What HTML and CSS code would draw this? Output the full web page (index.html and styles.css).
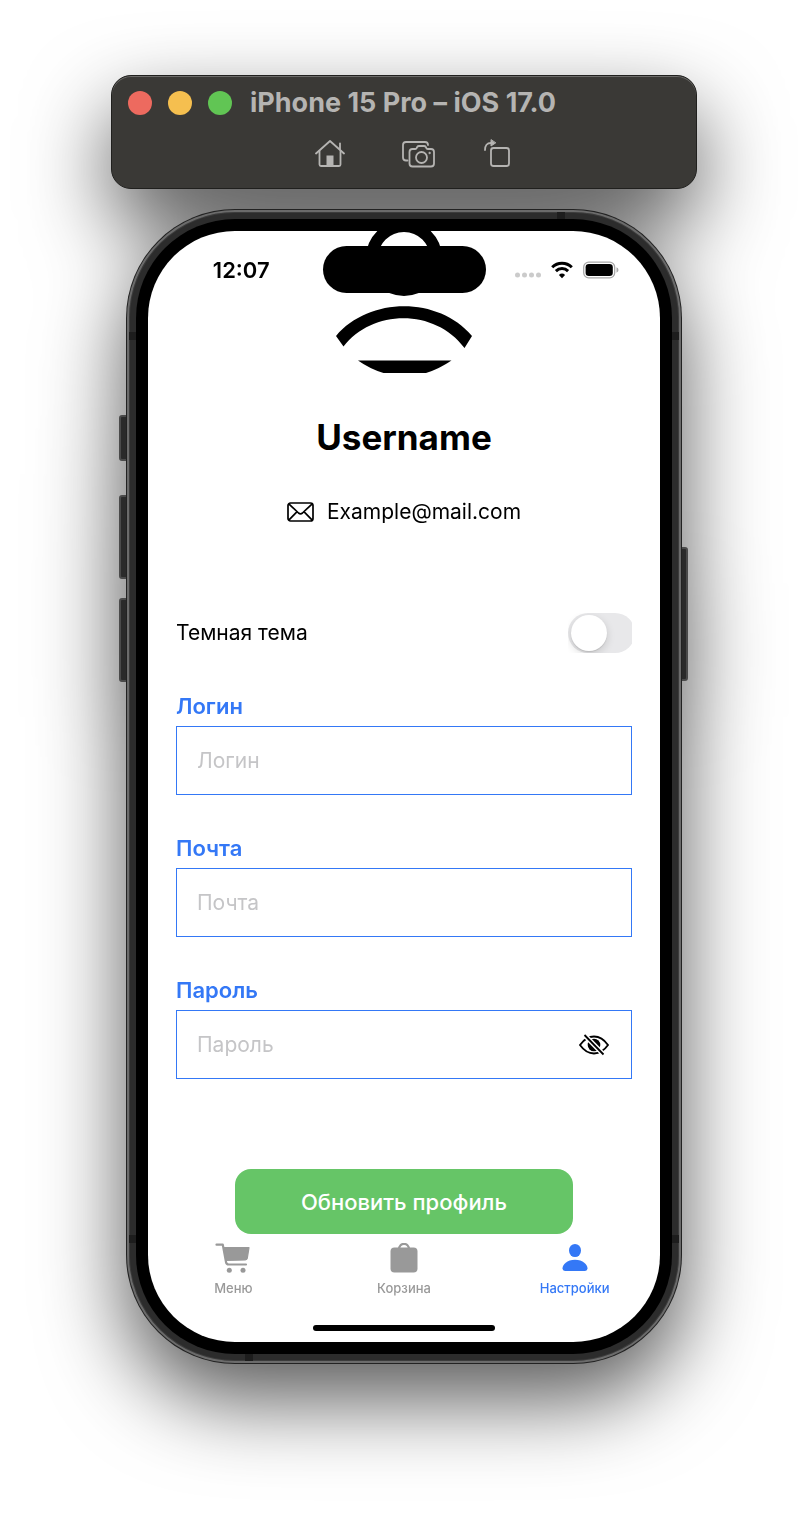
FILE: index.html
```html
<!DOCTYPE html>
<html lang="ru">
<head>
<meta charset="utf-8">
<meta name="viewport" content="width=device-width, initial-scale=1">
<title>iPhone 15 Pro – iOS 17.0</title>
<link rel="stylesheet" href="styles.css">
</head>
<body>
<div class="simulator">
  <header class="toolbar">
    <div class="toolbar-title">
      <button class="dot dot-close" type="button" aria-label="Close"></button>
      <button class="dot dot-minimize" type="button" aria-label="Minimize"></button>
      <button class="dot dot-zoom" type="button" aria-label="Zoom"></button>
      <span class="device-name">iPhone 15 Pro – iOS 17.0</span>
    </div>
    <div class="toolbar-actions">
      <button class="tool tool-home" type="button" aria-label="Home">
        <svg width="30" height="30" viewBox="0 0 30 30" fill="none" stroke="currentColor" stroke-width="1.800" stroke-linecap="round" stroke-linejoin="round"><path d="M1 14.500 15 2l14 12.500"/><path d="M4.500 12v13.500q0 1.500 1.500 1.500h18q1.500 0 1.500-1.500V12"/><path d="M25 10V4.500"/><path d="M11.500 27v-10.500h7V27z" fill="currentColor" stroke="none"/></svg>
      </button>
      <button class="tool" type="button" aria-label="Screenshot">
        <svg width="34" height="30" viewBox="0 0 34 30" fill="none" stroke="currentColor" stroke-width="1.800" stroke-linecap="round" stroke-linejoin="round"><path d="M5.500 21.500H4q-3 0-3-3V6q0-3 3-3h19q3 0 3 3"/><path d="M10.500 10H13q1 0 1.500-.8l.7-1.200Q15.800 7 17 7h5q1.200 0 1.800 1l.7 1.200q.5.800 1.500.8h3q3 0 3 3v11.500q0 3-3 3H10.500q-3 0-3-3V13q0-3 3-3z"/><circle cx="19.500" cy="18.500" r="5.500"/><circle cx="27.500" cy="14" r=".7" fill="currentColor" stroke-width="1"/></svg>
      </button>
      <button class="tool" type="button" aria-label="Rotate">
        <svg width="26" height="30" viewBox="0 0 26 30" fill="none" stroke="currentColor" stroke-width="1.800" stroke-linecap="round" stroke-linejoin="round"><rect x="7" y="9" width="18" height="18" rx="2.500"/><path d="M1 11Q1 4 7 4"/><path d="M7 1v6l4.500-3z" fill="currentColor" stroke-width="1"/></svg>
      </button>
    </div>
  </header>

  <div class="phone">
    <i class="side-key side-key-action"></i>
    <i class="side-key side-key-up"></i>
    <i class="side-key side-key-down"></i>
    <i class="side-key side-key-power"></i>
    <div class="frame">
      <i class="band band-upper"></i>
      <i class="band band-lower"></i>
      <i class="band-edge band-edge-top"></i>
      <i class="band-edge band-edge-bottom"></i>
      <div class="bezel">
        <main class="screen">
          <div class="status-bar">
            <time class="clock">12:07</time>
            <div class="island"></div>
            <div class="status-icons">
              <svg width="26" height="18" viewBox="0 0 26 18" fill="#cbcbcb"><circle cx="2.500" cy="14" r="2.500"/><circle cx="9.500" cy="14" r="2.500"/><circle cx="16.500" cy="14" r="2.500"/><circle cx="23.500" cy="14" r="2.500"/></svg>
              <svg width="22" height="18" viewBox="0 0 22 18" fill="none" stroke="#000" stroke-width="3"><path d="M1.200 6.300a14 14 0 0 1 19.600 0"/><path d="M4.900 10.100a8.700 8.700 0 0 1 12.200 0"/><path d="M11 17.200 7.900 13.900a4.600 4.600 0 0 1 6.200 0z" fill="#000" stroke="none"/></svg>
              <svg width="36" height="18" viewBox="0 0 36 18"><rect x=".7" y="1.200" width="31" height="15.600" rx="5" fill="none" stroke="#a8a8a8" stroke-width="1.300"/><rect x="2.600" y="3" width="27.200" height="12" rx="3.300"/><path d="M33.500 6.300q2 .8 2 2.700t-2 2.700z" fill="#a8a8a8"/></svg>
            </div>
          </div>

          <section class="profile">
            <svg class="avatar" width="136" height="142" viewBox="0 0 136 142"><circle cx="68" cy="27" r="32" fill="none" stroke="#000" stroke-width="12"/><path d="M0 105C33 66 102 65 136 105L128.500 117C99 77 36 78 7.500 115.500z"/><path d="M22 129.500H115.500Q103 138 90 142H47.500Q34 138 22 129.500z"/></svg>
            <h1 class="username">Username</h1>
            <p class="email">
              <svg width="27" height="20" viewBox="0 0 27 20" fill="none" stroke="#000" stroke-width="1.700" stroke-linejoin="round"><rect x="1" y="1" width="25" height="18" rx="2.500"/><path d="M1.800 1.800 11.500 11q2 1.600 4 0L25.200 1.800M1.800 18.200l8.300-8.500M25.200 18.200l-8.300-8.500"/></svg>
              <span>Example@mail.com</span>
            </p>
          </section>

          <form class="settings">
            <div class="theme-row">
              <label for="dark">Темная тема</label>
              <span class="switch-clip"><input class="switch" id="dark" type="checkbox" role="switch"></span>
            </div>
            <div class="field">
              <label class="field-label" for="login">Логин</label>
              <div class="field-box"><input class="field-input" id="login" type="text" placeholder="Логин"></div>
            </div>
            <div class="field">
              <label class="field-label" for="mail">Почта</label>
              <div class="field-box"><input class="field-input" id="mail" type="email" placeholder="Почта"></div>
            </div>
            <div class="field">
              <label class="field-label" for="password">Пароль</label>
              <div class="field-box">
                <input class="field-input" id="password" type="password" placeholder="Пароль">
                <button class="reveal" type="button" aria-label="Показать пароль">
                  <svg width="30" height="22" viewBox="0 0 30 22"><path d="M1 11Q7 2.500 15 2.500T29 11q-6 8.500-14 8.500T1 11z" fill="#fff" stroke="#000" stroke-width="1.800"/><circle cx="15" cy="11" r="6.300"/><path d="M6 1.500 24.500 20.500" stroke="#fff" stroke-width="4.800"/><path d="M5.500 1 24.500 20.500" stroke="#000" stroke-width="1.800"/></svg>
                </button>
              </div>
            </div>
            <button class="submit" type="submit">Обновить профиль</button>
          </form>

          <nav class="tabs">
            <a class="tab" href="#menu">
              <svg width="36" height="30" viewBox="0 0 36 30" fill="none" stroke="currentColor" stroke-width="2.200" stroke-linecap="round" stroke-linejoin="round"><path d="M1.500 1.700h6.300L11 19q.4 2.500 2.800 2.500H31"/><path d="M9 4.700h25l-1.700 10.500q-.3 1.600-2 1.700L11 17.500z" fill="currentColor" stroke-width="1.200"/><circle cx="14.300" cy="27.300" r="2.500" fill="currentColor" stroke="none"/><circle cx="28" cy="27.300" r="2.500" fill="currentColor" stroke="none"/></svg>
              <span>Меню</span>
            </a>
            <a class="tab" href="#cart">
              <svg width="28" height="30" viewBox="0 0 28 30" fill="currentColor"><rect x=".5" y="4.500" width="27" height="25" rx="4"/><path d="M9 6.500C9-1 19-1 19 6.500" fill="none" stroke="currentColor" stroke-width="2.200"/></svg>
              <span>Корзина</span>
            </a>
            <a class="tab tab-active" href="#settings" aria-current="page">
              <svg width="28" height="30" viewBox="0 0 28 30" fill="currentColor"><ellipse cx="14" cy="7.500" rx="6" ry="6.600"/><path d="M4 28q-2.500 0-2.500-2.400C1.500 21.500 6 16.700 14 16.700s12.500 4.800 12.500 8.900Q26.500 28 24 28z"/></svg>
              <span>Настройки</span>
            </a>
          </nav>
          <div class="home-indicator"></div>
        </main>
      </div>
    </div>
  </div>
</div>
</body>
</html>
```
FILE: styles.css
```css
* {
  box-sizing: border-box;
}

body {
  margin: 0;
  background: #fff;
  color: #000;
  font-family: Inter, "Liberation Sans", sans-serif;
}

button {
  margin: 0;
  padding: 0;
  border: 0;
  background: none;
  color: inherit;
  font: inherit;
}

svg {
  display: block;
  flex: none;
}

.simulator {
  display: flex;
  flex-direction: column;
  gap: 21px;
  padding: 75px 111px 150px;
  filter: drop-shadow(0 36px 42px rgba(0, 0, 0, 0.65));
}

/* Window bar */
.toolbar {
  display: flex;
  flex-direction: column;
  gap: 20px;
  padding: 11px 16px 19px;
  border: 1px solid #20201e;
  border-radius: 20px;
  background: #3a3936;
  box-shadow: inset 0 1px 0 #6c6b69;
  color: #b5b4b2;
}

.toolbar-title {
  display: flex;
  align-items: center;
  gap: 16px;
}

.dot {
  width: 24px;
  height: 24px;
  border-radius: 50%;
}

.dot-close {
  background: #ed6a5f;
}

.dot-minimize {
  background: #f5bf4f;
}

.dot-zoom {
  background: #61c554;
}

.device-name {
  padding-left: 2px;
  font-size: 27px;
  font-weight: 700;
  line-height: 32px;
  white-space: nowrap;
}

.toolbar-actions {
  display: flex;
  justify-content: center;
  gap: 48px;
  padding-left: 17px;
}

.tool-home {
  padding-right: 9px;
}

/* Phone body */
.phone {
  position: relative;
  margin: 0 16px;
}

.frame {
  position: relative;
  padding: 7px;
  border: 2px solid #6b6b6b;
  border-radius: 108px;
  background: #2c2c2c;
  box-shadow: inset 0 0 0 1px #3c3c3c, 0 0 0 1px #222;
}

.bezel {
  position: relative;
  padding: 12px;
  border-radius: 99px;
  background: #000;
}

.side-key {
  position: absolute;
  width: 10px;
  border: 2px solid #4a4a4a;
  border-radius: 3px;
  background: #2a2a2a;
}

.side-key-action {
  top: 205px;
  left: -8px;
  height: 46px;
}

.side-key-up {
  top: 285px;
  left: -8px;
  height: 84px;
}

.side-key-down {
  top: 388px;
  left: -8px;
  height: 84px;
}

.side-key-power {
  top: 337px;
  right: -7px;
  height: 134px;
}

.band {
  position: absolute;
  right: 0;
  left: 0;
  height: 8px;
  background: #1d1d1d;
}

.band-upper {
  top: 120px;
}

.band-lower {
  bottom: 118px;
}

.band-edge {
  position: absolute;
  width: 8px;
  height: 8px;
  background: #1d1d1d;
}

.band-edge-top {
  top: 0;
  right: 114px;
}

.band-edge-bottom {
  bottom: 0;
  left: 116px;
}

/* Screen */
.screen {
  position: relative;
  display: flex;
  flex-direction: column;
  overflow: hidden;
  border-radius: 87px;
  background: #fff;
  font-size: 21px;
  line-height: 28px;
}

.status-bar {
  position: absolute;
  top: 15px;
  right: 0;
  left: 0;
  display: grid;
  grid-template-columns: 1fr 163px 1fr;
  align-items: center;
}

.clock {
  padding-left: 12px;
  font-size: 22px;
  font-weight: 600;
  text-align: center;
}

.island {
  height: 47px;
  border-radius: 24px;
  background: #000;
}

.status-icons {
  display: flex;
  justify-content: center;
  gap: 10px;
  padding-right: 12px;
}

.profile {
  display: flex;
  flex-direction: column;
  align-items: center;
}

.username {
  margin: 42px 0 39px;
  font-size: 35px;
  font-weight: 700;
  line-height: 44px;
}

.email {
  display: flex;
  align-items: center;
  gap: 13px;
  margin: 0;
}

.settings {
  display: flex;
  flex-direction: column;
  gap: 39px;
  padding: 87px 28px 0;
}

.theme-row {
  display: flex;
  align-items: center;
  justify-content: space-between;
}

.switch-clip {
  width: 64px;
  height: 40px;
  overflow: hidden;
}

.switch {
  display: block;
  width: 67px;
  height: 40px;
  margin: 0;
  padding: 2px 3px;
  appearance: none;
  border-radius: 20px;
  background: #e8e8ea;
}

.switch::before {
  content: "";
  display: block;
  width: 36px;
  height: 36px;
  border-radius: 50%;
  background: #fff;
  box-shadow: 0 3px 8px rgba(0, 0, 0, 0.15), 0 1px 1px rgba(0, 0, 0, 0.1);
}

.switch:checked {
  padding-left: 28px;
  background: #65c466;
}

.field {
  display: flex;
  flex-direction: column;
  gap: 6px;
}

.field-label {
  color: #3478f6;
  font-size: 22px;
  font-weight: 600;
}

.field-box {
  display: flex;
  align-items: center;
  height: 69px;
  padding: 0 22px 0 20px;
  border: 1px solid #3478f6;
}

.field-input {
  flex: 1;
  min-width: 0;
  padding: 0;
  border: 0;
  outline: 0;
  background: none;
  color: #000;
  font: inherit;
}

.field-input::placeholder {
  color: #c5c5c7;
  opacity: 1;
}

.submit {
  align-self: center;
  width: 74%;
  height: 65px;
  margin-top: 51px;
  border-radius: 16px;
  background: #66c567;
  color: #fff;
  font-size: 22px;
  font-weight: 500;
}

.tabs {
  display: grid;
  grid-template-columns: repeat(3, 1fr);
  padding-top: 9px;
}

.tab {
  display: flex;
  flex-direction: column;
  align-items: center;
  gap: 7px;
  color: #999;
  font-size: 13px;
  font-weight: 500;
  line-height: 16px;
  text-decoration: none;
}

.tab-active {
  color: #3478f6;
}

.home-indicator {
  align-self: center;
  width: 182px;
  height: 6px;
  margin: 29px 0 11px;
  border-radius: 3px;
  background: #000;
}
```
